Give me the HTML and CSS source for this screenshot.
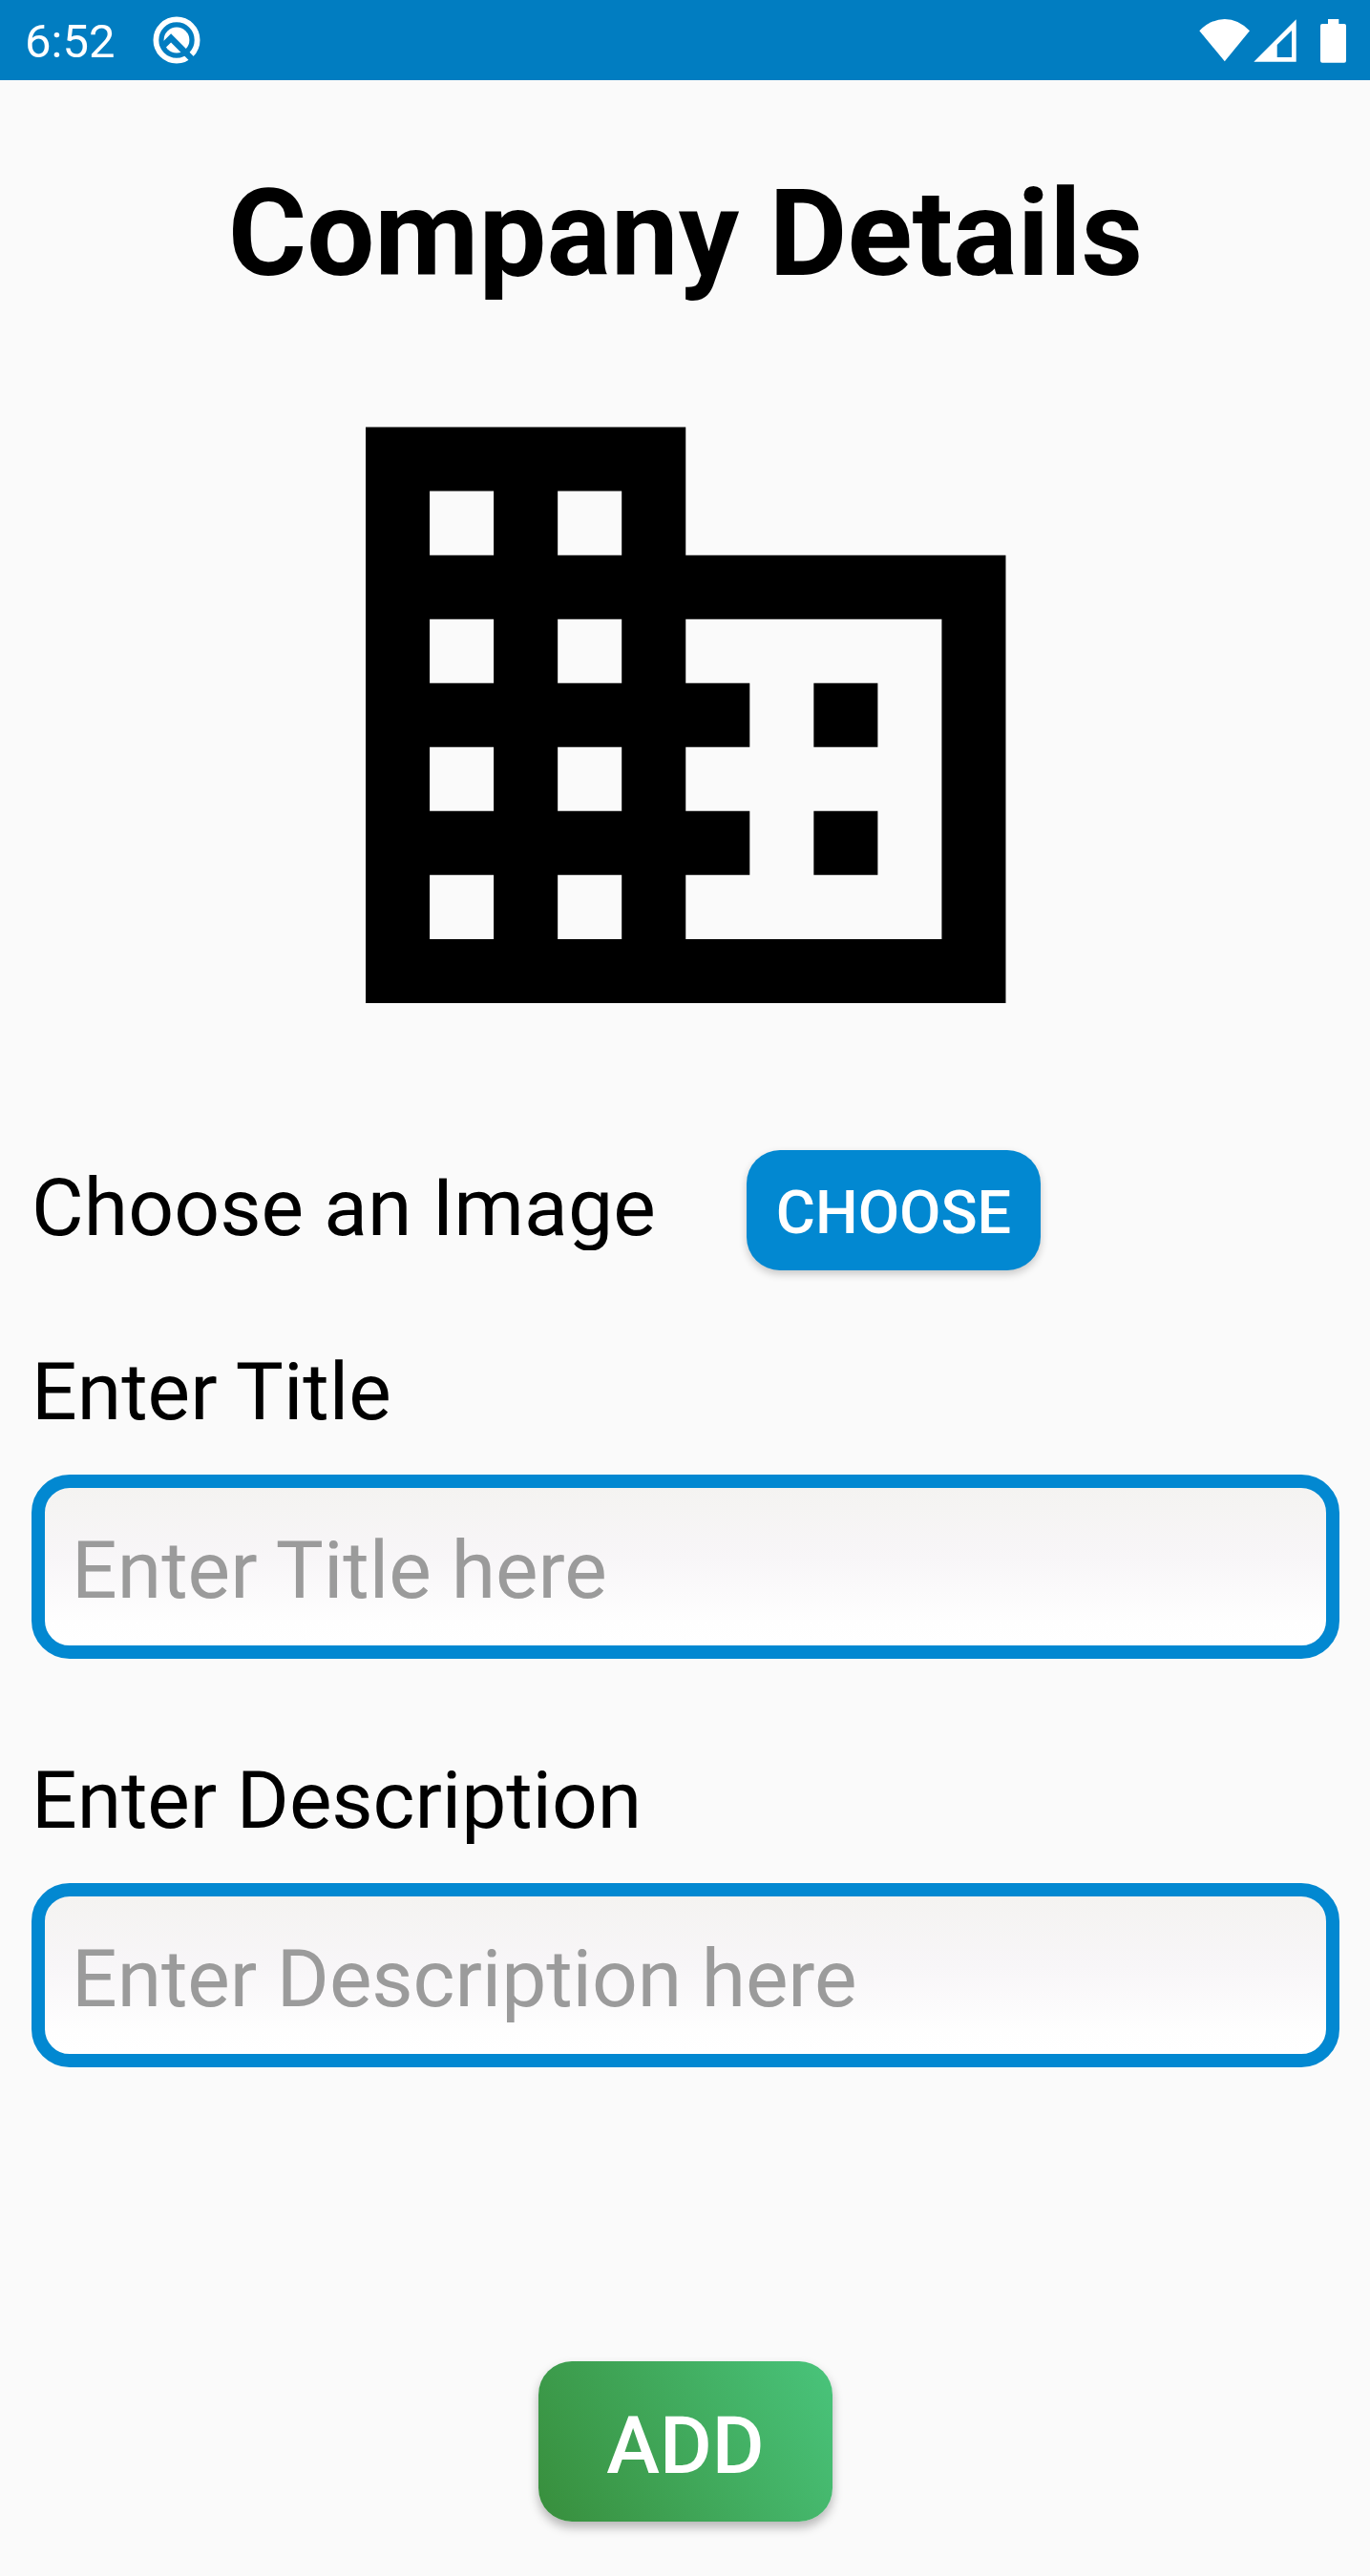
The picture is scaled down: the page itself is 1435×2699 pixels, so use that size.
FILE: index.html
```html
<!DOCTYPE html>
<html lang="en">
<head>
<meta charset="utf-8">
<title>Company Details</title>
<link rel="stylesheet" href="styles.css">
</head>
<body>
<header class="status-bar">
  <span class="clock">6:52</span>
  <svg class="notification" viewBox="0 0 50 50" aria-hidden="true">
    <circle class="ring" cx="25" cy="25" r="21.6"/>
    <circle class="disc" cx="25" cy="25" r="13.4"/>
    <path class="cut" d="M9.4 32.6 19.1 22.9 45 48.8"/>
  </svg>
  <svg class="indicators" viewBox="0 0 156 48" aria-hidden="true">
    <path d="M.3 14.3Q12.5 2 26.8 2T53 14.3L26.8 46.3Z"/>
    <path fill-rule="evenodd" d="M57.3 46.7 101.7 2.3V46.7ZM81.7 29V42H97V14Z"/>
    <path d="M135 2h11.3v5h5.7a2 2 0 0 1 2 2v36.700a2 2 0 0 1-2 2h-23a2 2 0 0 1-2-2V9a2 2 0 0 1 2-2h6Z"/>
  </svg>
</header>
<main class="screen">
  <h1 class="title">Company Details</h1>
  <svg class="company-icon" viewBox="0 0 24 24" aria-hidden="true">
    <path d="M12 7V3H2v18h20V7H12zM6 19H4v-2h2v2zm0-4H4v-2h2v2zm0-4H4V9h2v2zm0-4H4V5h2v2zm4 12H8v-2h2v2zm0-4H8v-2h2v2zm0-4H8V9h2v2zm0-4H8V5h2v2zm10 12h-8v-2h2v-2h-2v-2h2v-2h-2V9h8v10zm-2-8h-2v2h2v-2zm0 4h-2v2h2v-2z"/>
  </svg>
  <div class="image-row">
    <span class="image-label">Choose an Image</span>
    <button class="button choose" type="button">CHOOSE</button>
  </div>
  <label class="label" for="title">Enter Title</label>
  <input class="field" id="title" type="text" placeholder="Enter Title here">
  <label class="label second" for="description">Enter Description</label>
  <input class="field second-field" id="description" type="text" placeholder="Enter Description here">
  <button class="button add" type="button">ADD</button>
</main>
</body>
</html>
```
FILE: styles.css
```css
* {
  box-sizing: border-box;
}

body {
  margin: 0;
  min-height: 2699px;
  background: #fafafa;
  color: #000;
  font-family: Roboto, "Liberation Sans", sans-serif;
}

.status-bar {
  display: flex;
  align-items: center;
  height: 84px;
  padding: 0 23px 0 26px;
  background: #017dc1;
  color: #fff;
}

.clock {
  padding-top: 4px;
  font-size: 49px;
  line-height: 58px;
}

.notification {
  width: 50px;
  height: 50px;
  margin-left: 40px;
}

.ring {
  fill: none;
  stroke: #fff;
  stroke-width: 5.8;
}

.disc {
  fill: #fff;
}

.cut {
  fill: none;
  stroke: #017dc1;
  stroke-width: 6.4;
}

.indicators {
  width: 156px;
  height: 48px;
  margin-left: auto;
  fill: #fff;
}

.screen {
  display: flex;
  flex-direction: column;
  padding: 87px 32px 0 33px;
}

.title {
  margin: 0;
  font-size: 126px;
  font-weight: 700;
  line-height: 148px;
  letter-spacing: 0.06px;
  text-align: center;
}

.company-icon {
  align-self: center;
  width: 804.5px;
  height: 804.5px;
  margin-top: 28.3px;
}

.image-row {
  display: grid;
  grid-template-columns: 749px 308px;
  align-items: start;
  height: 126px;
  margin-top: 53.2px;
}

.image-label {
  height: 89px;
  margin-top: 16px;
  overflow: hidden;
  font-size: 84px;
  line-height: 90px;
  letter-spacing: 0.1px;
  white-space: nowrap;
}

.button {
  padding: 0;
  border: 0;
  border-radius: 35px;
  color: #fff;
  font-family: inherit;
  font-weight: 500;
  text-align: center;
}

.choose {
  height: 126px;
  padding-top: 5px;
  background: #0288d1;
  box-shadow: 0 4px 8px rgba(0, 0, 0, 0.2);
  font-size: 63px;
}

.label {
  margin-top: 79px;
  font-size: 84px;
  line-height: 98px;
}

.second {
  margin-top: 100px;
  letter-spacing: -0.1px;
}

.field {
  width: 100%;
  height: 193px;
  margin-top: 37px;
  padding: 9px 28px 0;
  border: 14px solid #0288d1;
  border-radius: 40px;
  outline: 0;
  background: linear-gradient(#f4f3f1, #f8f6f8 45%, #fefefe 85%, #fff) padding-box;
  color: #000;
  font-family: inherit;
  font-size: 84px;
}

.second-field {
  letter-spacing: -0.1px;
}

.field::placeholder {
  color: #9b9b9b;
  opacity: 1;
}

.add {
  align-self: center;
  width: 308px;
  height: 168px;
  margin-top: 308px;
  padding-top: 10px;
  background: linear-gradient(61.4deg, #388e3c, #49c47b);
  box-shadow: 0 6px 11px rgba(0, 0, 0, 0.28);
  font-size: 84px;
}
```
